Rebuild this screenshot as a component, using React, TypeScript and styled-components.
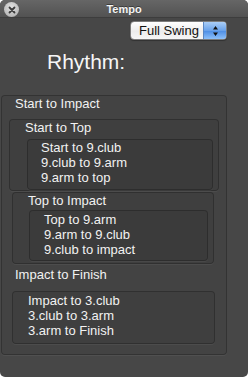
import React from 'react';
import styled, {createGlobalStyle} from 'styled-components';

const GlobalStyle = createGlobalStyle`
    html, body {
        margin: 0;
        padding: 0;
        background: #ffffff;
    }
    body {
        font-family: 'Liberation Sans', Arial, sans-serif;
        -webkit-font-smoothing: antialiased;
    }
`;

const Window = styled.div`
    width: 248px;
    height: 377px;
    border-radius: 5px;
    overflow: hidden;
    background: #474747;
    display: flex;
    flex-direction: column;
    color: #f2f2f2;
`;

const TitleBar = styled.div`
    height: 18px;
    flex: none;
    position: relative;
    display: flex;
    align-items: center;
    justify-content: center;
    background: linear-gradient(#666666, #525252);
    border-bottom: 1px solid #3d3d3d;
    box-sizing: border-box;
`;

const Title = styled.span`
    font-size: 11px;
    font-weight: 700;
    color: #f4f4f4;
    line-height: 18px;
    text-shadow: 0 -1px 0 rgba(0, 0, 0, 0.4);
`;

const CloseButton = styled.div`
    position: absolute;
    left: 4px;
    top: 2px;
    width: 15px;
    height: 15px;
    border-radius: 50%;
    background: radial-gradient(circle at 50% 35%, #e2e2e2, #a9a9a9);
    display: flex;
    align-items: center;
    justify-content: center;
`;

const Body = styled.div`
    flex: 1;
    display: flex;
    flex-direction: column;
    padding: 3px 0 0 1px;
`;

const TopRow = styled.div`
    display: flex;
    justify-content: flex-end;
    padding-right: 21px;
`;

const Popup = styled.div`
    width: 97px;
    height: 19px;
    box-sizing: border-box;
    border: 1px solid #7c7c7c;
    border-radius: 4px;
    overflow: hidden;
    display: flex;
    background: linear-gradient(#ffffff, #ececec 55%, #f6f6f6);
    box-shadow: 0 1px 1px rgba(0, 0, 0, 0.3);
`;

const PopupLabel = styled.span`
    flex: 1;
    font-size: 13px;
    line-height: 17px;
    color: #111111;
    padding-left: 8px;
`;

const Stepper = styled.div`
    width: 22px;
    border-left: 1px solid #5a86c2;
    background: linear-gradient(#a9cdf6, #6aa2ea 50%, #4b8ce4 51%, #8dc0fa);
    display: flex;
    align-items: center;
    justify-content: center;
`;

const Heading = styled.div`
    font-size: 21px;
    line-height: 30px;
    margin: 7px 0 0 46px;
    color: #f6f6f6;
`;

const Box = styled.div<{$left: number; $width: number; $height: number; $top: number}>`
    margin-left: ${p => p.$left}px;
    margin-top: ${p => p.$top}px;
    width: ${p => p.$width}px;
    height: ${p => p.$height}px;
    box-sizing: border-box;
    border: 1px solid rgba(0, 0, 0, 0.24);
    border-radius: 4px;
    background: rgba(0, 0, 0, 0.05);
    box-shadow: 0 1px 0 rgba(255, 255, 255, 0.05);
    display: flex;
    flex-direction: column;
`;

const GroupTitle = styled.div<{$left: number; $top: number}>`
    font-size: 13px;
    line-height: 15px;
    margin-left: ${p => p.$left}px;
    margin-top: ${p => p.$top}px;
    white-space: nowrap;
`;

const Lines = styled.div<{$left: number; $top: number}>`
    display: flex;
    flex-direction: column;
    padding-left: ${p => p.$left}px;
    padding-top: ${p => p.$top}px;
`;

const Line = styled.div`
    font-size: 13px;
    line-height: 15px;
    white-space: nowrap;
`;

export default function App() {
    return (
        <>
            <GlobalStyle />
            <Window>
                <TitleBar>
                    <CloseButton>
                        <svg width="8" height="8" viewBox="0 0 8 8">
                            <path d="M1.5 1.5L6.5 6.5M6.5 1.5L1.5 6.5" stroke="#3c3c3c" strokeWidth="1.8" strokeLinecap="round" />
                        </svg>
                    </CloseButton>
                    <Title>Tempo</Title>
                </TitleBar>
                <Body>
                    <TopRow>
                        <Popup>
                            <PopupLabel>Full Swing</PopupLabel>
                            <Stepper>
                                <svg width="7" height="12" viewBox="0 0 7 12">
                                    <path d="M3.5 1L6 4.5H1Z M3.5 11L6 7.5H1Z" fill="#111111" />
                                </svg>
                            </Stepper>
                        </Popup>
                    </TopRow>
                    <Heading>Rhythm:</Heading>
                    <Box $left={0} $top={18} $width={226} $height={260}>
                        <GroupTitle $left={13} $top={0}>Start to Impact</GroupTitle>
                        <Box $left={7} $top={8} $width={210} $height={72}>
                            <GroupTitle $left={15} $top={0}>Start to Top</GroupTitle>
                            <Box $left={17} $top={4} $width={186} $height={52}>
                                <Lines $left={13} $top={0}>
                                    <Line>Start to 9.club</Line>
                                    <Line>9.club to 9.arm</Line>
                                    <Line>9.arm to top</Line>
                                </Lines>
                            </Box>
                        </Box>
                        <Box $left={10} $top={1} $width={202} $height={72}>
                            <GroupTitle $left={15} $top={0}>Top to Impact</GroupTitle>
                            <Box $left={16} $top={2} $width={179} $height={51}>
                                <Lines $left={14} $top={1}>
                                    <Line>Top to 9.arm</Line>
                                    <Line>9.arm to 9.club</Line>
                                    <Line>9.club to impact</Line>
                                </Lines>
                            </Box>
                        </Box>
                        <GroupTitle $left={13} $top={3}>Impact to Finish</GroupTitle>
                        <Box $left={10} $top={9} $width={203} $height={53}>
                            <Lines $left={15} $top={1}>
                                <Line>Impact to 3.club</Line>
                                <Line>3.club to 3.arm</Line>
                                <Line>3.arm to Finish</Line>
                            </Lines>
                        </Box>
                    </Box>
                </Body>
            </Window>
        </>
    );
}
